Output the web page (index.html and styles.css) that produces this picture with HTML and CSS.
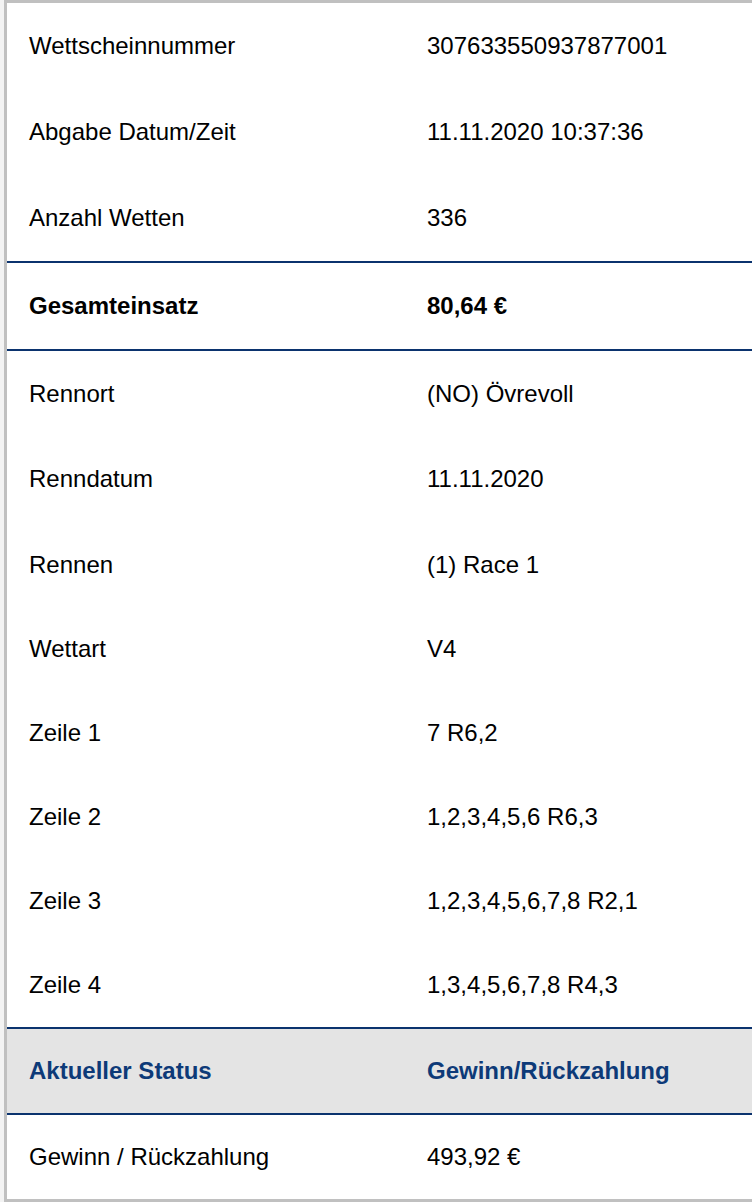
FILE: index.html
```html
<!DOCTYPE html>
<html lang="de">
<head>
<meta charset="utf-8">
<link rel="stylesheet" href="styles.css">
</head>
<body>
<div class="sheet">
  <div class="group">
    <div class="row tall"><div class="label">Wettscheinnummer</div><div class="value">307633550937877001</div></div>
    <div class="row tall"><div class="label">Abgabe Datum/Zeit</div><div class="value">11.11.2020 10:37:36</div></div>
    <div class="row tall"><div class="label">Anzahl Wetten</div><div class="value">336</div></div>
  </div>
  <div class="group rule">
    <div class="row tall strong"><div class="label">Gesamteinsatz</div><div class="value">80,64 €</div></div>
  </div>
  <div class="group rule">
    <div class="row mid"><div class="label">Rennort</div><div class="value">(NO) Övrevoll</div></div>
    <div class="row tall"><div class="label">Renndatum</div><div class="value">11.11.2020</div></div>
    <div class="row mid"><div class="label">Rennen</div><div class="value">(1) Race 1</div></div>
    <div class="row"><div class="label">Wettart</div><div class="value">V4</div></div>
    <div class="row"><div class="label">Zeile 1</div><div class="value">7 R6,2</div></div>
    <div class="row"><div class="label">Zeile 2</div><div class="value">1,2,3,4,5,6 R6,3</div></div>
    <div class="row"><div class="label">Zeile 3</div><div class="value">1,2,3,4,5,6,7,8 R2,1</div></div>
    <div class="row"><div class="label">Zeile 4</div><div class="value">1,3,4,5,6,7,8 R4,3</div></div>
  </div>
  <div class="group rule status">
    <div class="row head"><div class="label">Aktueller Status</div><div class="value">Gewinn/Rückzahlung</div></div>
  </div>
  <div class="group rule">
    <div class="row"><div class="label">Gewinn / Rückzahlung</div><div class="value">493,92 €</div></div>
  </div>
</div>
</body>
</html>
```

FILE: styles.css
```css
html, body {
  margin: 0;
  padding: 0;
}
body {
  background: #f3f3f3;
  padding-left: 4px;
  font-family: "Liberation Sans", Arial, sans-serif;
  font-size: 24px;
  color: #000;
}
.sheet {
  background: #fff;
  border-top: 3px solid #c0c0c0;
  border-left: 3px solid #c0c0c0;
  border-bottom: 3px solid #c0c0c0;
  height: 1202px;
  box-sizing: border-box;
}
.rule {
  border-top: 2px solid #0b336e;
}
.row {
  display: grid;
  grid-template-columns: 398px 1fr;
  height: 84px;
  align-items: center;
}
.row.tall {
  height: 86px;
}
.row.mid {
  height: 85px;
}
.label, .value {
  padding-left: 22px;
  white-space: nowrap;
}
.strong {
  font-weight: bold;
}
.status {
  background: #e4e4e4;
}
.head {
  font-weight: bold;
  color: #0d3a78;
}
```
